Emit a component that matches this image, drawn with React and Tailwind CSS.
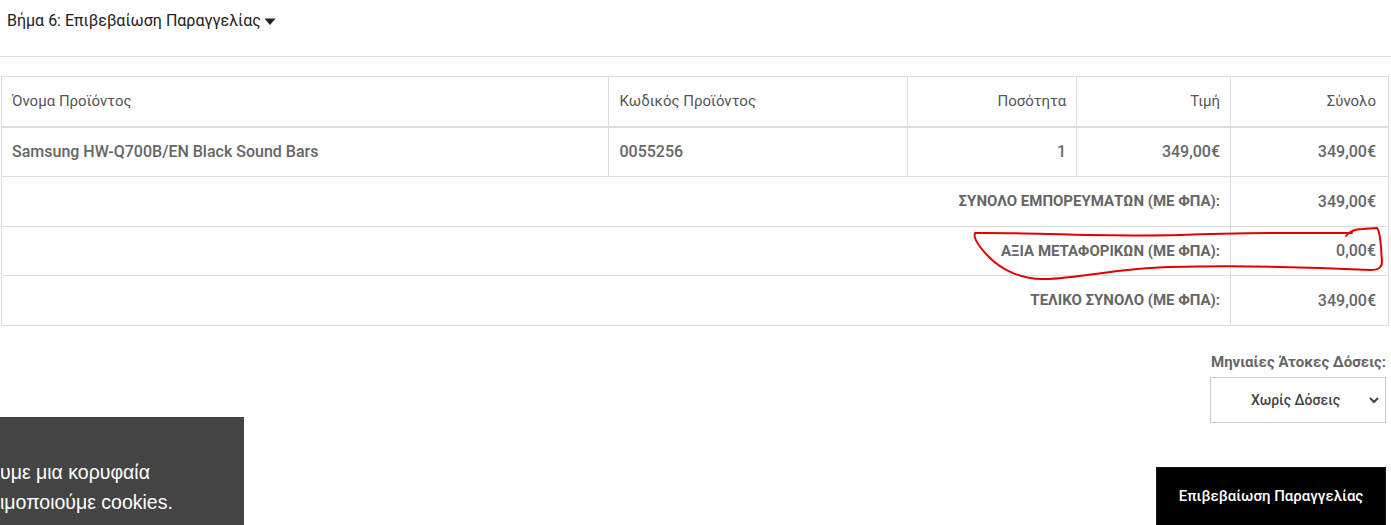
export default function App() {
  const font = { fontFamily: "Roboto, 'Noto Sans', sans-serif" };
  return (
    <div className="relative w-[1391px] h-[525px] overflow-hidden bg-white" style={font}>
      <div className="h-[57px] border-b border-[#dddddd] pl-[7px] pt-[9px]">
        <div className="flex items-center gap-[3px] text-[16px] text-[#222] leading-[24px]">
          <span>Βήμα 6: Επιβεβαίωση Παραγγελίας</span>
          <svg width="12" height="8" viewBox="0 0 12 8" className="mt-[1px]">
            <path d="M0.5 0.5 L11.5 0.5 L6 7 Z" fill="#222" />
          </svg>
        </div>
      </div>

      <div className="pt-[19px] pl-[1px] pr-[2px]">
        <table className="w-[1388px] border-collapse text-[15px] text-[#666]">
          <colgroup>
            <col className="w-[608px]" />
            <col className="w-[299px]" />
            <col className="w-[169px]" />
            <col className="w-[154px]" />
            <col className="w-[158px]" />
          </colgroup>
          <thead>
            <tr className="h-[50px] text-[#555]">
              <th className="border border-[#dddddd] border-b-2 px-[10px] text-left font-normal">Όνομα Προϊόντος</th>
              <th className="border border-[#dddddd] border-b-2 px-[10px] text-left font-normal">Κωδικός Προϊόντος</th>
              <th className="border border-[#dddddd] border-b-2 px-[10px] text-right font-normal">Ποσότητα</th>
              <th className="border border-[#dddddd] border-b-2 px-[10px] text-right font-normal">Τιμή</th>
              <th className="border border-[#dddddd] border-b-2 px-[12px] text-right font-normal">Σύνολο</th>
            </tr>
          </thead>
          <tbody className="text-[16px]">
            <tr className="h-[50px]">
              <td className="border border-[#dddddd] px-[10px] font-medium">Samsung HW-Q700B/EN Black Sound Bars</td>
              <td className="border border-[#dddddd] px-[10px] font-medium">0055256</td>
              <td className="border border-[#dddddd] px-[10px] text-right font-medium">1</td>
              <td className="border border-[#dddddd] px-[10px] text-right font-medium">349,00€</td>
              <td className="border border-[#dddddd] px-[12px] text-right font-medium">349,00€</td>
            </tr>
            <tr className="h-[50px]">
              <td colSpan={4} className="border border-[#dddddd] px-[10px] text-right text-[15px] font-bold">ΣΥΝΟΛΟ ΕΜΠΟΡΕΥΜΑΤΩΝ (ΜΕ ΦΠΑ):</td>
              <td className="border border-[#dddddd] px-[12px] text-right font-medium">349,00€</td>
            </tr>
            <tr className="h-[49px]">
              <td colSpan={4} className="border border-[#dddddd] px-[10px] text-right text-[15px] font-bold">ΑΞΙΑ ΜΕΤΑΦΟΡΙΚΩΝ (ΜΕ ΦΠΑ):</td>
              <td className="border border-[#dddddd] px-[12px] text-right font-medium">0,00€</td>
            </tr>
            <tr className="h-[50px]">
              <td colSpan={4} className="border border-[#dddddd] px-[10px] text-right text-[15px] font-bold">ΤΕΛΙΚΟ ΣΥΝΟΛΟ (ΜΕ ΦΠΑ):</td>
              <td className="border border-[#dddddd] px-[12px] text-right font-medium">349,00€</td>
            </tr>
          </tbody>
        </table>
      </div>

      <div className="flex flex-col items-end pr-[5px] pt-[25px]">
        <div className="text-[15px] font-bold text-[#666] leading-[22px]">Μηνιαίες Άτοκες Δόσεις:</div>
        <div className="mt-[4px] flex h-[46px] w-[176px] items-center border border-[#cccccc] pl-[18px] pr-[5px]">
          <span className="flex-1 text-center text-[14px] font-medium text-[#444]">Χωρίς Δόσεις</span>
          <svg width="12" height="8" viewBox="0 0 12 8" className="ml-[6px]">
            <path d="M2 2 L6 6 L10 2" fill="none" stroke="#444" strokeWidth="2" />
          </svg>
        </div>
        <div className="mt-[44px] flex h-[60px] w-[230px] items-center justify-center border border-[#151515] bg-black pb-[1px] text-[15px] font-medium text-white">
          Επιβεβαίωση Παραγγελίας
        </div>
      </div>

      <div
        className="absolute left-0 top-[417px] h-[108px] w-[244px] overflow-hidden bg-[#444444] pt-[40px] text-[19.5px] leading-[30px] text-white"
        style={{ fontFamily: "'Liberation Sans', Arial, sans-serif" }}
      >
        <div className="whitespace-nowrap">υμε μια κορυφαία</div>
        <div className="whitespace-nowrap">ιμοποιούμε cookies.</div>
      </div>

      <svg className="pointer-events-none absolute left-0 top-0" width="1391" height="525" viewBox="0 0 1391 525">
        <path
          d="M1346,236 C1350,231 1355,229 1362,229 L1377,228 C1381,232 1381,250 1382,262 C1382,268 1378,270 1370,270 C1330,268 1260,265 1170,267 C1120,268 1080,278 1045,279 C1020,280 1000,268 990,258 C980,248 973,238 975,233 C1020,232 1100,237 1180,235 C1250,232 1300,233 1352,233"
          fill="none"
          stroke="#e00000"
          strokeWidth="2"
          strokeLinecap="round"
          strokeLinejoin="round"
        />
      </svg>
    </div>
  );
}
